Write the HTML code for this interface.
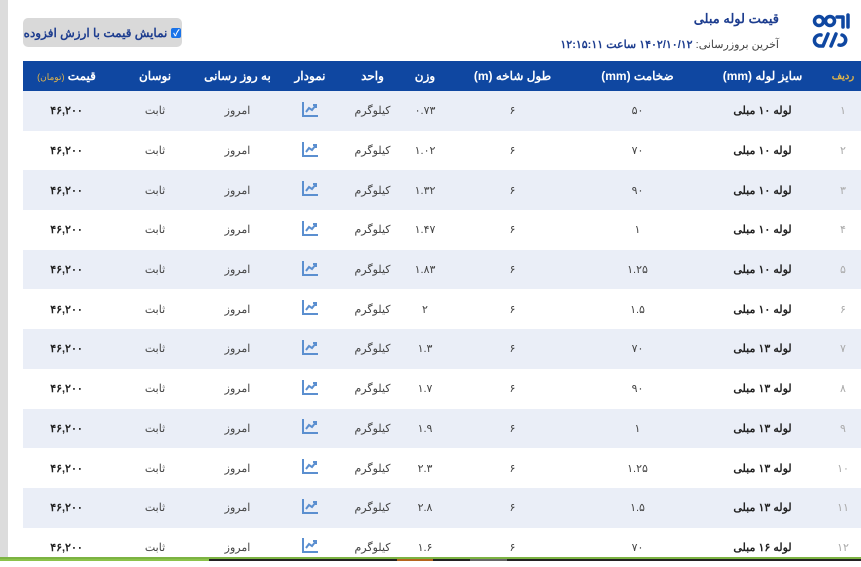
<!DOCTYPE html>
<html><head><meta charset="utf-8"><style>
body{margin:0;width:861px;height:561px;overflow:hidden;background:#fff;font-family:"Liberation Sans","Noto Sans CJK SC",sans-serif;position:relative}
.lb{position:absolute;left:0;top:0;width:8px;height:561px;background:#dcdcdc}
.btn{position:absolute;left:23px;top:18px;width:159px;height:29px;background:#d9d9d9;border-radius:5px;font-size:12px;color:#1d3d8f;display:flex;align-items:center;justify-content:center;box-sizing:border-box;direction:rtl;white-space:nowrap;font-weight:bold}
.btn .cb{width:10px;height:10px;background:#1a73e8;border-radius:2px;margin-left:4px;color:#fff;font-size:9px;line-height:10px;text-align:center}
.title{position:absolute;right:82px;top:11px;font-size:13px;color:#1d3d8f;direction:rtl;font-weight:bold}
.upd{position:absolute;right:82px;top:38px;font-size:11px;color:#444;direction:rtl}
.upd b{color:#1d3d8f}
table{position:absolute;left:23px;top:61px;border-collapse:collapse;table-layout:fixed;width:838px}
th{background:#0f47a1;color:#fff;height:30px;font-size:12px;font-weight:bold;padding:0;text-align:center;direction:rtl;white-space:nowrap}
td{height:39.7px;padding:0;text-align:center;font-size:11px;color:#444}
tr:nth-child(odd) td{background:#eaeef7}
td.b{font-weight:bold;color:#222}
td.n{color:#aaa}
.ft{position:absolute;left:0;top:557px;width:861px;height:2px;background:#7cb342}
</style></head><body>
<div class="lb"></div>
<div class="btn"><span class="cb">✓</span>نمایش قیمت با ارزش افزوده</div>
<svg style="position:absolute;left:812px;top:11px" width="40" height="40" viewBox="0 0 40 40" fill="none" stroke="#0f47a1" stroke-width="3.5" stroke-linecap="round"><circle cx="7" cy="10" r="4.5"/><circle cx="18" cy="10" r="4.5"/><path d="M25 6h6M31 6v10M36 4v12"/><path d="M9 24a5 5 0 1 0 -2 11h3M16 23l-5 12M24 23l-5 12M30 24a5 5 0 1 1 -3 10"/></svg>
<div class="title">قیمت لوله مبلی</div>
<div class="upd">آخرین بروزرسانی: <b>۱۴۰۲/۱۰/۱۲ ساعت ۱۲:۱۵:۱۱</b></div>
<table>
<colgroup><col style="width:87px"><col style="width:90px"><col style="width:75px"><col style="width:70px"><col style="width:55px"><col style="width:50px"><col style="width:125px"><col style="width:125px"><col style="width:125px"><col style="width:36px"></colgroup>
<tr><th>قیمت <span style="color:#e0b44a;font-size:9px;font-weight:normal">(تومان)</span></th><th>نوسان</th><th>به روز رسانی</th><th>نمودار</th><th>واحد</th><th>وزن</th><th>طول شاخه (m)</th><th>ضخامت (mm)</th><th>سایز لوله (mm)</th><th style="color:#e0b44a;font-size:10px">ردیف</th></tr>
<tbody id="tb"></tbody>
</table>
<div class="ft"></div>
<div style="position:absolute;top:559px;height:2px;left:0;width:209px;background:#8bc34a"></div>
<div style="position:absolute;top:559px;height:2px;left:209px;width:652px;background:#222"></div>
<div style="position:absolute;top:559px;height:2px;left:397px;width:36px;background:#b5651d"></div>
<div style="position:absolute;top:559px;height:2px;left:470px;width:37px;background:#666"></div>
<script>
var d=[["۱","لوله ۱۰ مبلی","۵۰","۰.۷۳"],["۲","لوله ۱۰ مبلی","۷۰","۱.۰۲"],["۳","لوله ۱۰ مبلی","۹۰","۱.۳۲"],["۴","لوله ۱۰ مبلی","۱","۱.۴۷"],["۵","لوله ۱۰ مبلی","۱.۲۵","۱.۸۳"],["۶","لوله ۱۰ مبلی","۱.۵","۲"],["۷","لوله ۱۳ مبلی","۷۰","۱.۳"],["۸","لوله ۱۳ مبلی","۹۰","۱.۷"],["۹","لوله ۱۳ مبلی","۱","۱.۹"],["۱۰","لوله ۱۳ مبلی","۱.۲۵","۲.۳"],["۱۱","لوله ۱۳ مبلی","۱.۵","۲.۸"],["۱۲","لوله ۱۶ مبلی","۷۰","۱.۶"]];
var ic='<svg width="16" height="15" viewBox="0 0 16 15" fill="none" stroke="#5b8fd0" stroke-width="2"><path d="M1 0v14h15"/><path d="M4 10l3-4 3 2 4-5M11 3h3v3"/></svg>';
var h='';d.forEach(function(r){h+='<tr><td class="b">۴۶,۲۰۰</td><td>ثابت</td><td>امروز</td><td>'+ic+'</td><td>کیلوگرم</td><td>'+r[3]+'</td><td>۶</td><td>'+r[2]+'</td><td class="b" style="direction:rtl">'+r[1]+'</td><td class="n">'+r[0]+'</td></tr>'});
document.getElementById('tb').innerHTML=h;
</script>
</body></html>
